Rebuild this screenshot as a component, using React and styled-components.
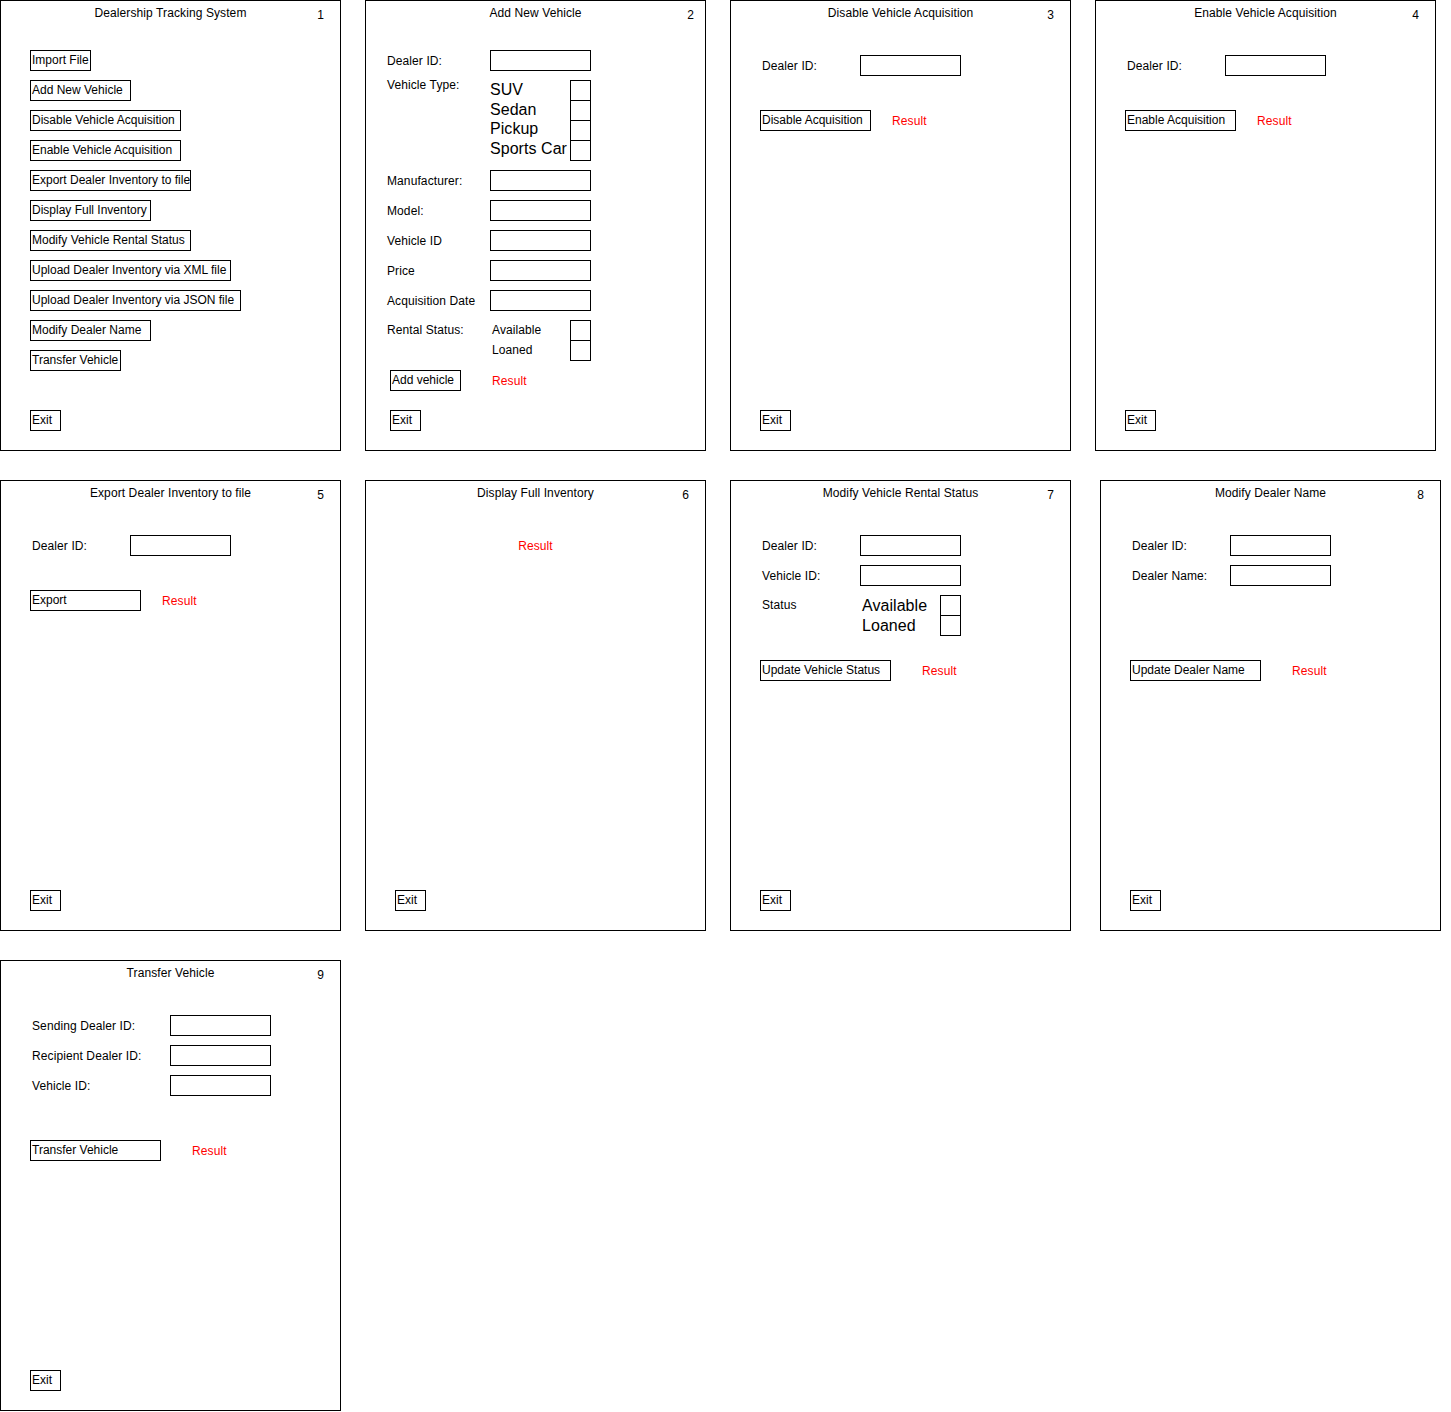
import styled, { createGlobalStyle } from 'styled-components'

const GlobalStyle = createGlobalStyle`
  body {
    margin: 0;
    background: #fff;
    color: #000;
    font-family: "Liberation Sans", Arial, sans-serif;
  }
`;

const Canvas = styled.div`
  display: grid;
  grid-template-columns: repeat(4, 341px);
  column-gap: 24px;
  row-gap: 29px;
  align-items: start;
  width: 1451px;
`;

const FrameBox = styled.section`
  box-sizing: border-box;
  width: 341px;
  height: 451px;
  margin-left: ${p => p.$shift || 0}px;
  border: 1px solid #000;
  display: flex;
  flex-direction: column;
  font-size: 12px;
  letter-spacing: 0.1px;
`;

const Header = styled.header`
  display: grid;
  grid-template-columns: 1fr auto 1fr;
  grid-template-rows: 13px;
  padding-top: 6px;
  line-height: 13px;
`;

const Title = styled.span`
  grid-column: 2;
  white-space: nowrap;
`;

const PageNumber = styled.span`
  justify-self: end;
  margin-top: 2px;
  padding-right: ${p => p.$pad}px;
`;

const Body = styled.div`
  flex: 1;
  display: flex;
  flex-direction: column;
  align-items: flex-start;
  padding: 0 0 19px ${p => p.$left - 1}px;
`;

const Menu = styled.nav`
  display: flex;
  flex-direction: column;
  align-items: flex-start;
  gap: 9px;
  margin-top: 30px;
`;

const Button = styled.button`
  box-sizing: border-box;
  width: ${p => p.$w}px;
  height: 21px;
  margin: 0;
  padding: 0 0 0 1px;
  border: 1px solid #000;
  border-radius: 0;
  background: #fff;
  color: #000;
  font-family: inherit;
  font-size: 12px;
  letter-spacing: 0;
  line-height: 19px;
  text-align: left;
  white-space: nowrap;
  overflow: visible;
`;

const ExitButton = styled(Button)`
  margin-top: auto;
`;

const Fields = styled.div`
  display: grid;
  grid-template-columns: ${p => p.$labelWidth}px 101px;
  row-gap: 9px;
  margin-top: ${p => p.$top}px;
  margin-left: ${p => p.$indent}px;
`;

const Label = styled.span`
  align-self: ${p => (p.$top ? 'start' : 'center')};
  line-height: ${p => p.$lh || 14}px;
  white-space: nowrap;
`;

const TextBox = styled.input`
  box-sizing: border-box;
  width: 101px;
  height: 21px;
  margin: 0;
  padding: 0;
  border: 1px solid #000;
  border-radius: 0;
  background: #fff;
  outline: none;
`;

const Options = styled.div`
  display: flex;
  justify-content: space-between;
  width: 101px;
`;

const OptionText = styled.div`
  display: flex;
  flex-direction: column;
  margin-left: ${p => p.$indent}px;
  padding-top: ${p => p.$pad || 0}px;
  font-size: ${p => p.$size}px;
  line-height: ${p => p.$lh}px;
  letter-spacing: ${p => (p.$size > 12 ? 0.05 : 0.1)}px;
  white-space: nowrap;
`;

const CheckStack = styled.div`
  display: flex;
  flex-direction: column;
`;

const Check = styled.span`
  box-sizing: border-box;
  display: block;
  width: 21px;
  height: 21px;
  border: 1px solid #000;

  & + & {
    margin-top: -1px;
  }
`;

const Actions = styled.div`
  display: flex;
  align-items: center;
  margin-top: ${p => p.$top}px;
`;

const Result = styled.span`
  margin-left: ${p => p.$gap}px;
  color: #ff0000;
  line-height: 14px;
`;

const Notice = styled.div`
  margin-top: 39px;
  color: #ff0000;
  line-height: 14px;
  text-align: center;
`;

function Frame({ title, number, numberPad = 16, shift, children }) {
  return (
    <FrameBox $shift={shift}>
      <Header>
        <Title>{title}</Title>
        <PageNumber $pad={numberPad}>{number}</PageNumber>
      </Header>
      {children}
    </FrameBox>
  );
}

function CheckOptions({ items, size, lh, indent, pad }) {
  return (
    <Options>
      <OptionText $size={size} $lh={lh} $indent={indent} $pad={pad}>
        {items.map(item => <span key={item}>{item}</span>)}
      </OptionText>
      <CheckStack>
        {items.map(item => <Check key={item} />)}
      </CheckStack>
    </Options>
  );
}

const menuItems = [
  ['Import File', 61],
  ['Add New Vehicle', 101],
  ['Disable Vehicle Acquisition', 151],
  ['Enable Vehicle Acquisition', 151],
  ['Export Dealer Inventory to file', 161],
  ['Display Full Inventory', 121],
  ['Modify Vehicle Rental Status', 161],
  ['Upload Dealer Inventory via XML file', 201],
  ['Upload Dealer Inventory via JSON file', 211],
  ['Modify Dealer Name', 121],
  ['Transfer Vehicle', 91],
];

export default function App() {
  return (
    <>
      <GlobalStyle />
      <Canvas>
        <Frame title="Dealership Tracking System" number="1">
          <Body $left={30}>
            <Menu>
              {menuItems.map(([text, w]) => (
                <Button key={text} $w={w}>{text}</Button>
              ))}
            </Menu>
            <ExitButton $w={31}>Exit</ExitButton>
          </Body>
        </Frame>

        <Frame title="Add New Vehicle" number="2" numberPad={11}>
          <Body $left={25}>
            <Fields $top={30} $indent={-3} $labelWidth={103}>
              <Label>Dealer ID:</Label>
              <TextBox readOnly />
              <Label $top $lh={11}>Vehicle Type:</Label>
              <CheckOptions items={['SUV', 'Sedan', 'Pickup', 'Sports Car']} size={16} lh={19.5} indent={0} />
              <Label>Manufacturer:</Label>
              <TextBox readOnly />
              <Label>Model:</Label>
              <TextBox readOnly />
              <Label>Vehicle ID</Label>
              <TextBox readOnly />
              <Label>Price</Label>
              <TextBox readOnly />
              <Label>Acquisition Date</Label>
              <TextBox readOnly />
              <Label $top $lh={20}>Rental Status:</Label>
              <CheckOptions items={['Available', 'Loaned']} size={12} lh={20} indent={2} />
            </Fields>
            <Actions $top={9}>
              <Button $w={71}>Add vehicle</Button>
              <Result $gap={31}>Result</Result>
            </Actions>
            <ExitButton $w={31}>Exit</ExitButton>
          </Body>
        </Frame>

        <Frame title="Disable Vehicle Acquisition" number="3">
          <Body $left={30}>
            <Fields $top={35} $indent={2} $labelWidth={98}>
              <Label>Dealer ID:</Label>
              <TextBox readOnly />
            </Fields>
            <Actions $top={34}>
              <Button $w={111}>Disable Acquisition</Button>
              <Result $gap={21}>Result</Result>
            </Actions>
            <ExitButton $w={31}>Exit</ExitButton>
          </Body>
        </Frame>

        <Frame title="Enable Vehicle Acquisition" number="4">
          <Body $left={30}>
            <Fields $top={35} $indent={2} $labelWidth={98}>
              <Label>Dealer ID:</Label>
              <TextBox readOnly />
            </Fields>
            <Actions $top={34}>
              <Button $w={111}>Enable Acquisition</Button>
              <Result $gap={21}>Result</Result>
            </Actions>
            <ExitButton $w={31}>Exit</ExitButton>
          </Body>
        </Frame>

        <Frame title="Export Dealer Inventory to file" number="5">
          <Body $left={30}>
            <Fields $top={35} $indent={2} $labelWidth={98}>
              <Label>Dealer ID:</Label>
              <TextBox readOnly />
            </Fields>
            <Actions $top={34}>
              <Button $w={111}>Export</Button>
              <Result $gap={21}>Result</Result>
            </Actions>
            <ExitButton $w={31}>Exit</ExitButton>
          </Body>
        </Frame>

        <Frame title="Display Full Inventory" number="6">
          <Notice>Result</Notice>
          <Body $left={30}>
            <ExitButton $w={31}>Exit</ExitButton>
          </Body>
        </Frame>

        <Frame title="Modify Vehicle Rental Status" number="7">
          <Body $left={30}>
            <Fields $top={35} $indent={2} $labelWidth={98}>
              <Label>Dealer ID:</Label>
              <TextBox readOnly />
              <Label>Vehicle ID:</Label>
              <TextBox readOnly />
              <Label $top $lh={20}>Status</Label>
              <CheckOptions items={['Available', 'Loaned']} size={16} lh={20} indent={2} pad={1} />
            </Fields>
            <Actions $top={24}>
              <Button $w={131}>Update Vehicle Status</Button>
              <Result $gap={31}>Result</Result>
            </Actions>
            <ExitButton $w={31}>Exit</ExitButton>
          </Body>
        </Frame>

        <Frame title="Modify Dealer Name" number="8" shift={5}>
          <Body $left={30}>
            <Fields $top={35} $indent={2} $labelWidth={98}>
              <Label>Dealer ID:</Label>
              <TextBox readOnly />
              <Label>Dealer Name:</Label>
              <TextBox readOnly />
            </Fields>
            <Actions $top={74}>
              <Button $w={131}>Update Dealer Name</Button>
              <Result $gap={31}>Result</Result>
            </Actions>
            <ExitButton $w={31}>Exit</ExitButton>
          </Body>
        </Frame>

        <Frame title="Transfer Vehicle" number="9">
          <Body $left={30}>
            <Fields $top={35} $indent={2} $labelWidth={138}>
              <Label>Sending Dealer ID:</Label>
              <TextBox readOnly />
              <Label>Recipient Dealer ID:</Label>
              <TextBox readOnly />
              <Label>Vehicle ID:</Label>
              <TextBox readOnly />
            </Fields>
            <Actions $top={44}>
              <Button $w={131}>Transfer Vehicle</Button>
              <Result $gap={31}>Result</Result>
            </Actions>
            <ExitButton $w={31}>Exit</ExitButton>
          </Body>
        </Frame>
      </Canvas>
    </>
  );
}
